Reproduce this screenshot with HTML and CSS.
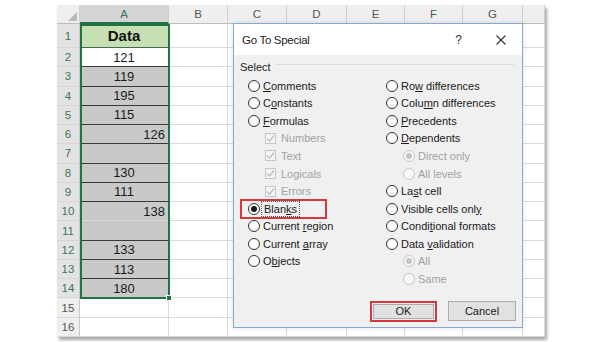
FILE: index.html
```html
<!DOCTYPE html>
<html>
<head>
<meta charset="utf-8">
<link rel="stylesheet" href="styles.css">
</head>
<body>
<div class="page">
  <div class="sheet">
    <div class="row hdr">
      <div class="cell w0 hd corner"><svg width="9" height="9" viewBox="0 0 9 9"><polygon points="9,0 9,9 0,9" fill="#b9b9b9"/></svg></div>
      <div class="cell wa hd sel">A</div>
      <div class="cell wb hd">B</div>
      <div class="cell wc hd">C</div>
      <div class="cell wd hd">D</div>
      <div class="cell we hd">E</div>
      <div class="cell wf hd">F</div>
      <div class="cell wg hd">G</div>
      <div class="cell wh hd"></div>
    </div>
    <div class="row r1">
      <div class="cell w0 rh sel">1</div>
      <div class="cell wa head-cell">Data</div>
      <div class="cell wb"></div><div class="cell wc"></div><div class="cell wd"></div><div class="cell we"></div><div class="cell wf"></div><div class="cell wg"></div><div class="cell wh"></div>
    </div>
    <div class="row">
      <div class="cell w0 rh sel">2</div>
      <div class="cell wa white dark">121</div>
      <div class="cell wb"></div><div class="cell wc"></div><div class="cell wd"></div><div class="cell we"></div><div class="cell wf"></div><div class="cell wg"></div><div class="cell wh"></div>
    </div>
    <div class="row">
      <div class="cell w0 rh sel">3</div>
      <div class="cell wa gray dark">119</div>
      <div class="cell wb"></div><div class="cell wc"></div><div class="cell wd"></div><div class="cell we"></div><div class="cell wf"></div><div class="cell wg"></div><div class="cell wh"></div>
    </div>
    <div class="row">
      <div class="cell w0 rh sel">4</div>
      <div class="cell wa gray dark">195</div>
      <div class="cell wb"></div><div class="cell wc"></div><div class="cell wd"></div><div class="cell we"></div><div class="cell wf"></div><div class="cell wg"></div><div class="cell wh"></div>
    </div>
    <div class="row">
      <div class="cell w0 rh sel">5</div>
      <div class="cell wa gray dark">115</div>
      <div class="cell wb"></div><div class="cell wc"></div><div class="cell wd"></div><div class="cell we"></div><div class="cell wf"></div><div class="cell wg"></div><div class="cell wh"></div>
    </div>
    <div class="row">
      <div class="cell w0 rh sel">6</div>
      <div class="cell wa gray dark right">126</div>
      <div class="cell wb"></div><div class="cell wc"></div><div class="cell wd"></div><div class="cell we"></div><div class="cell wf"></div><div class="cell wg"></div><div class="cell wh"></div>
    </div>
    <div class="row">
      <div class="cell w0 rh sel">7</div>
      <div class="cell wa gray dark"></div>
      <div class="cell wb"></div><div class="cell wc"></div><div class="cell wd"></div><div class="cell we"></div><div class="cell wf"></div><div class="cell wg"></div><div class="cell wh"></div>
    </div>
    <div class="row">
      <div class="cell w0 rh sel">8</div>
      <div class="cell wa gray dark">130</div>
      <div class="cell wb"></div><div class="cell wc"></div><div class="cell wd"></div><div class="cell we"></div><div class="cell wf"></div><div class="cell wg"></div><div class="cell wh"></div>
    </div>
    <div class="row">
      <div class="cell w0 rh sel">9</div>
      <div class="cell wa gray dark">111</div>
      <div class="cell wb"></div><div class="cell wc"></div><div class="cell wd"></div><div class="cell we"></div><div class="cell wf"></div><div class="cell wg"></div><div class="cell wh"></div>
    </div>
    <div class="row">
      <div class="cell w0 rh sel">10</div>
      <div class="cell wa gray right">138</div>
      <div class="cell wb"></div><div class="cell wc"></div><div class="cell wd"></div><div class="cell we"></div><div class="cell wf"></div><div class="cell wg"></div><div class="cell wh"></div>
    </div>
    <div class="row">
      <div class="cell w0 rh sel">11</div>
      <div class="cell wa gray dark"></div>
      <div class="cell wb"></div><div class="cell wc"></div><div class="cell wd"></div><div class="cell we"></div><div class="cell wf"></div><div class="cell wg"></div><div class="cell wh"></div>
    </div>
    <div class="row">
      <div class="cell w0 rh sel">12</div>
      <div class="cell wa gray dark">133</div>
      <div class="cell wb"></div><div class="cell wc"></div><div class="cell wd"></div><div class="cell we"></div><div class="cell wf"></div><div class="cell wg"></div><div class="cell wh"></div>
    </div>
    <div class="row">
      <div class="cell w0 rh sel">13</div>
      <div class="cell wa gray dark">113</div>
      <div class="cell wb"></div><div class="cell wc"></div><div class="cell wd"></div><div class="cell we"></div><div class="cell wf"></div><div class="cell wg"></div><div class="cell wh"></div>
    </div>
    <div class="row">
      <div class="cell w0 rh sel">14</div>
      <div class="cell wa gray">180</div>
      <div class="cell wb"></div><div class="cell wc"></div><div class="cell wd"></div><div class="cell we"></div><div class="cell wf"></div><div class="cell wg"></div><div class="cell wh"></div>
    </div>
    <div class="row">
      <div class="cell w0 rh">15</div>
      <div class="cell wa"></div>
      <div class="cell wb"></div><div class="cell wc"></div><div class="cell wd"></div><div class="cell we"></div><div class="cell wf"></div><div class="cell wg"></div><div class="cell wh"></div>
    </div>
    <div class="row">
      <div class="cell w0 rh">16</div>
      <div class="cell wa"></div>
      <div class="cell wb"></div><div class="cell wc"></div><div class="cell wd"></div><div class="cell we"></div><div class="cell wf"></div><div class="cell wg"></div><div class="cell wh"></div>
    </div>
    <div class="selection"></div>
    <div class="handle"></div>
  </div>

  <div class="dialog">
    <div class="titlebar">
      <span class="title">Go To Special</span>
      <span class="help">?</span>
      <svg class="close" width="10" height="10" viewBox="0 0 10 10"><path d="M0.5 0.5 L9.5 9.5 M9.5 0.5 L0.5 9.5" stroke="#333" stroke-width="1.1" fill="none"/></svg>
    </div>
    <div class="body">
      <div class="group-label"><span>Select</span><span class="rule"></span></div>
      <div class="options">
        <div class="col">
          <div class="opt"><span class="radio"></span><span><u>C</u>omments</span></div>
          <div class="opt"><span class="radio"></span><span>C<u>o</u>nstants</span></div>
          <div class="opt"><span class="radio"></span><span><u>F</u>ormulas</span></div>
          <div class="opt sub dis"><span class="check"><svg width="9" height="9" viewBox="0 0 9 9"><path d="M1 4.5 L3.5 7 L8 1.5" stroke="#bdbdbd" stroke-width="1.2" fill="none"/></svg></span><span>Numbers</span></div>
          <div class="opt sub dis"><span class="check"><svg width="9" height="9" viewBox="0 0 9 9"><path d="M1 4.5 L3.5 7 L8 1.5" stroke="#bdbdbd" stroke-width="1.2" fill="none"/></svg></span><span>Text</span></div>
          <div class="opt sub dis"><span class="check"><svg width="9" height="9" viewBox="0 0 9 9"><path d="M1 4.5 L3.5 7 L8 1.5" stroke="#bdbdbd" stroke-width="1.2" fill="none"/></svg></span><span>Logicals</span></div>
          <div class="opt sub dis"><span class="check"><svg width="9" height="9" viewBox="0 0 9 9"><path d="M1 4.5 L3.5 7 L8 1.5" stroke="#bdbdbd" stroke-width="1.2" fill="none"/></svg></span><span>Errors</span></div>
          <div class="opt"><span class="radio on"></span><span class="focus">Blan<u>k</u>s</span></div>
          <div class="opt"><span class="radio"></span><span>Current <u>r</u>egion</span></div>
          <div class="opt"><span class="radio"></span><span>Current <u>a</u>rray</span></div>
          <div class="opt"><span class="radio"></span><span>O<u>b</u>jects</span></div>
        </div>
        <div class="col">
          <div class="opt"><span class="radio"></span><span>Ro<u>w</u> differences</span></div>
          <div class="opt"><span class="radio"></span><span>Colu<u>m</u>n differences</span></div>
          <div class="opt"><span class="radio"></span><span><u>P</u>recedents</span></div>
          <div class="opt"><span class="radio"></span><span><u>D</u>ependents</span></div>
          <div class="opt sub dis"><span class="radio on"></span><span>Direct only</span></div>
          <div class="opt sub dis"><span class="radio"></span><span>All levels</span></div>
          <div class="opt"><span class="radio"></span><span>La<u>s</u>t cell</span></div>
          <div class="opt"><span class="radio"></span><span>Visible cells onl<u>y</u></span></div>
          <div class="opt"><span class="radio"></span><span>Condi<u>t</u>ional formats</span></div>
          <div class="opt"><span class="radio"></span><span>Data <u>v</u>alidation</span></div>
          <div class="opt sub dis"><span class="radio on"></span><span>All</span></div>
          <div class="opt sub dis"><span class="radio"></span><span>Same</span></div>
        </div>
      </div>
      <div class="buttons">
        <button class="btn ok">OK</button>
        <button class="btn">Cancel</button>
      </div>
    </div>
    <div class="highlight"></div>
  </div>
</div>
</body>
</html>
```

FILE: styles.css
```css
* { box-sizing: border-box; }
body {
  margin: 0;
  background: #fff;
  font-family: "Liberation Sans", Arial, sans-serif;
}
.page {
  position: relative;
  width: 600px;
  height: 342px;
  overflow: hidden;
  padding: 5px 0 0 57px;
}
.sheet {
  position: relative;
  width: 488px;
  background: #fff;
  box-shadow: 2px 3px 3px rgba(0,0,0,0.35);
}
.row { display: flex; height: 19.27px; }
.row.hdr { height: 19px; }
.row.r1 { height: 24px; }
.cell {
  flex: none;
  height: 100%;
  border-right: 1px solid #dadada;
  border-bottom: 1px solid #dadada;
  display: flex;
  align-items: center;
  justify-content: center;
  font-size: 13px;
  color: #1b1b1b;
}
.w0 { width: 23px; }
.wa { width: 89px; }
.wb { width: 59px; }
.wc { width: 59px; }
.wd { width: 60px; }
.we { width: 58px; }
.wf { width: 58px; }
.wg { width: 60px; }
.wh { width: 22px; }
.hd {
  background: #efefef;
  border-right-color: #d0d0d0;
  border-bottom-color: #bdbdbd;
  color: #555;
  font-size: 11.5px;
}
.hd.sel {
  background: #d4d4d4;
  color: #3c7654;
  border-bottom: 2px solid #217346;
}
.corner {
  justify-content: flex-end;
  align-items: flex-end;
  padding: 0 2px 2px 0;
}
.rh {
  background: #efefef;
  border-right-color: #c8c8c8;
  border-bottom-color: #d6d6d6;
  color: #555;
  font-size: 11.5px;
}
.rh.sel {
  background: #e3e3e3;
  color: #3c7654;
}
.head-cell {
  background: #c6e0b4;
  font-weight: bold;
  font-size: 15px;
  color: #111;
  border-bottom-color: #3f6e4f;
}
.white { background: #fff; }
.gray { background: #c9c9c9; }
.dark { border-bottom: 1px solid #3a3a3a; }
.right { justify-content: flex-end; padding-right: 3px; }
.selection {
  position: absolute;
  left: 23px;
  top: 19px;
  width: 90px;
  height: 275px;
  border: 2px solid #217346;
  pointer-events: none;
}
.handle {
  position: absolute;
  left: 109px;
  top: 290px;
  width: 6px;
  height: 6px;
  background: #217346;
  border: 1px solid #fff;
}

.dialog {
  position: absolute;
  left: 233px;
  top: 23px;
  width: 290px;
  height: 305px;
  border: 1px solid #84a9d2;
  background: #f0f0f0;
  box-shadow: 0 0 5px rgba(0,0,0,0.12);
  display: flex;
  flex-direction: column;
  font-size: 11px;
  color: #1a1a1a;
}
.titlebar {
  height: 31px;
  flex: none;
  background: #fff;
  display: flex;
  align-items: center;
  padding-left: 8px;
}
.title {
  flex: 1;
  font-size: 11.5px;
  letter-spacing: -0.3px;
  color: #222;
}
.help {
  font-size: 12px;
  color: #333;
  margin-right: 34px;
}
.close { margin-right: 16px; }
.body {
  flex: 1;
  padding: 5px 6px 0 6px;
  display: flex;
  flex-direction: column;
}
.group-label {
  height: 13px;
  display: flex;
  align-items: center;
  color: #222;
}
.rule {
  flex: 1;
  height: 1px;
  background: #dcdcdc;
  margin: -4px 2px 0 4px;
}
.options {
  display: grid;
  grid-template-columns: 138px 1fr;
  margin-top: 4px;
  padding-left: 8px;
}
.col { display: flex; flex-direction: column; }
.opt {
  height: 17.55px;
  display: flex;
  align-items: center;
  white-space: nowrap;
}
.opt u { text-underline-offset: 1px; }
.opt.sub { padding-left: 17px; }
.opt.dis { color: #a2a2a2; }
.radio {
  flex: none;
  position: relative;
  width: 12px;
  height: 12px;
  border: 1px solid #333;
  border-radius: 50%;
  background: #fff;
  margin-right: 3px;
}
.radio.on::after {
  content: "";
  position: absolute;
  left: 2px;
  top: 2px;
  width: 6px;
  height: 6px;
  border-radius: 50%;
  background: #1a1a1a;
}
.dis .radio { border-color: #c6c6c6; background: #f8f8f8; }
.dis .radio.on::after { background: #c4c4c4; }
.check {
  flex: none;
  width: 11px;
  height: 11px;
  border: 1px solid #c6c6c6;
  background: #f4f4f4;
  margin-right: 5px;
  display: flex;
  align-items: center;
  justify-content: center;
}
.focus {
  outline: 1px dotted #555;
  outline-offset: 1px;
  padding: 0 1px;
}
.buttons {
  display: flex;
  justify-content: flex-end;
  align-items: center;
  gap: 11px;
  margin-top: 13px;
  height: 21px;
}
.btn {
  font-family: inherit;
  font-size: 11px;
  color: #1a1a1a;
  background: #e1e1e1;
  border: 1px solid #adadad;
  width: 68px;
  height: 20px;
  padding: 0;
}
.btn.ok {
  width: 67px;
  height: 21px;
  border: 2px solid #d6373d;
  box-shadow: inset 0 0 0 1px #f0f0f0, inset 0 0 0 2px #adadad;
}
.highlight {
  position: absolute;
  left: 6px;
  top: 175px;
  width: 87px;
  height: 20px;
  border: 2px solid #d6373d;
  pointer-events: none;
}
```
